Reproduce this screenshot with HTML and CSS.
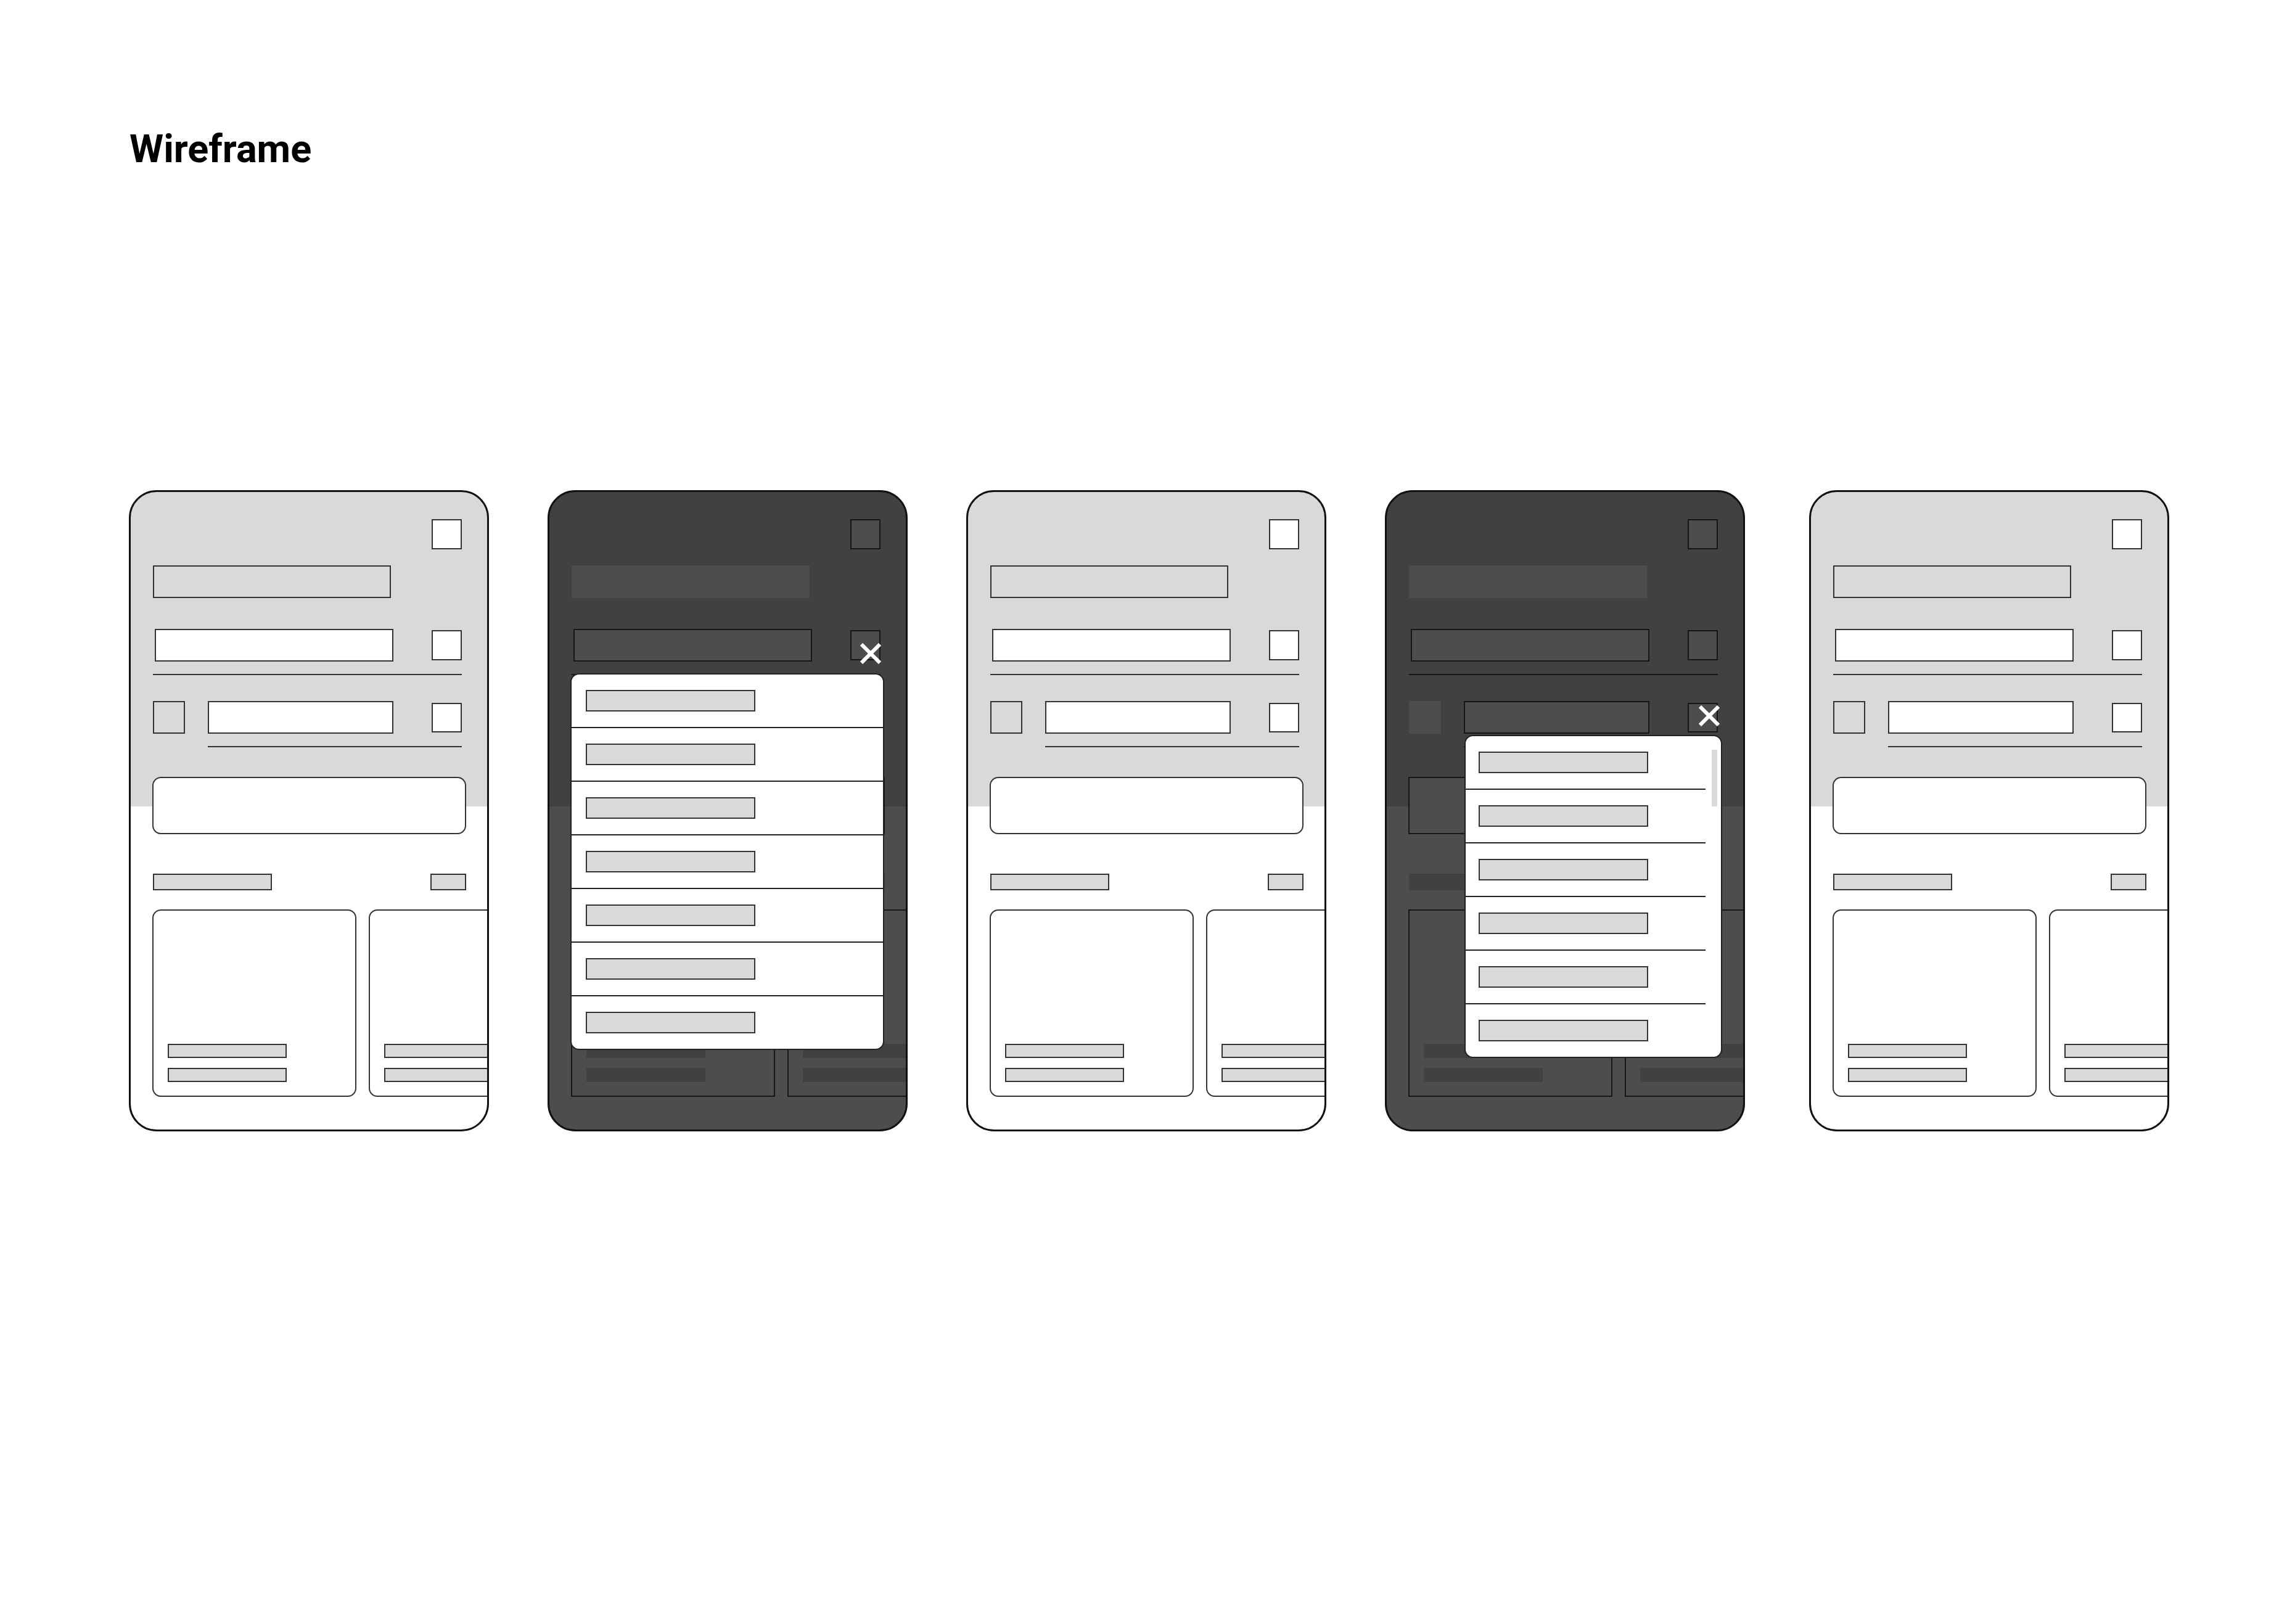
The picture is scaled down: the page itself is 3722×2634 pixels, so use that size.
FILE: index.html
```html
<!DOCTYPE html>
<html lang="en">
<head>
<meta charset="utf-8">
<title>Wireframe</title>
<link rel="stylesheet" href="styles.css">
</head>
<body>
<div class="page">
  <h1 class="title">Wireframe</h1>
  <div class="phones">

    <div class="phone">
      <div class="row-top"><div class="sq"></div></div>
      <div class="title-bar"></div>
      <div class="row2"><div class="input input-wide"></div><div class="sq"></div></div>
      <div class="divider"></div>
      <div class="row3"><div class="sq-small"></div><div class="input input-short"></div><div class="sq sq-r3"></div></div>
      <div class="divider divider-short"></div>
      <div class="search"></div>
      <div class="section-row"><div class="sec-bar"></div><div class="sec-bar sec-bar-sm"></div></div>
      <div class="cards">
        <div class="card"><div class="card-line"></div><div class="card-line"></div></div>
        <div class="card"><div class="card-line"></div><div class="card-line"></div></div>
      </div>
    </div>

    <div class="phone dim">
      <div class="row-top"><div class="sq"></div></div>
      <div class="title-bar"></div>
      <div class="row2"><div class="input input-wide"></div><div class="sq"></div></div>
      <div class="divider"></div>
      <div class="row3"><div class="sq-small"></div><div class="input input-short"></div><div class="sq sq-r3"></div></div>
      <div class="divider divider-short"></div>
      <div class="search"></div>
      <div class="section-row"><div class="sec-bar"></div><div class="sec-bar sec-bar-sm"></div></div>
      <div class="cards">
        <div class="card"><div class="card-line"></div><div class="card-line"></div></div>
        <div class="card"><div class="card-line"></div><div class="card-line"></div></div>
      </div>
      <svg class="close close-a" width="34" height="34" viewBox="0 0 34 34"><path d="M2 2 L32 32 M32 2 L2 32" stroke="#fff" stroke-width="6" fill="none"/></svg>
      <div class="dropdown dd-a">
        <div class="dd-row"><div class="dd-bar"></div></div>
        <div class="dd-row"><div class="dd-bar"></div></div>
        <div class="dd-row"><div class="dd-bar"></div></div>
        <div class="dd-row"><div class="dd-bar"></div></div>
        <div class="dd-row"><div class="dd-bar"></div></div>
        <div class="dd-row"><div class="dd-bar"></div></div>
        <div class="dd-row"><div class="dd-bar"></div></div>
      </div>
    </div>

    <div class="phone">
      <div class="row-top"><div class="sq"></div></div>
      <div class="title-bar"></div>
      <div class="row2"><div class="input input-wide"></div><div class="sq"></div></div>
      <div class="divider"></div>
      <div class="row3"><div class="sq-small"></div><div class="input input-short"></div><div class="sq sq-r3"></div></div>
      <div class="divider divider-short"></div>
      <div class="search"></div>
      <div class="section-row"><div class="sec-bar"></div><div class="sec-bar sec-bar-sm"></div></div>
      <div class="cards">
        <div class="card"><div class="card-line"></div><div class="card-line"></div></div>
        <div class="card"><div class="card-line"></div><div class="card-line"></div></div>
      </div>
    </div>

    <div class="phone dim">
      <div class="row-top"><div class="sq"></div></div>
      <div class="title-bar"></div>
      <div class="row2"><div class="input input-wide"></div><div class="sq"></div></div>
      <div class="divider"></div>
      <div class="row3"><div class="sq-small"></div><div class="input input-short"></div><div class="sq sq-r3"></div></div>
      <div class="divider divider-short"></div>
      <div class="search"></div>
      <div class="section-row"><div class="sec-bar"></div><div class="sec-bar sec-bar-sm"></div></div>
      <div class="cards">
        <div class="card"><div class="card-line"></div><div class="card-line"></div></div>
        <div class="card"><div class="card-line"></div><div class="card-line"></div></div>
      </div>
      <svg class="close close-b" width="34" height="34" viewBox="0 0 34 34"><path d="M2 2 L32 32 M32 2 L2 32" stroke="#fff" stroke-width="6" fill="none"/></svg>
      <div class="dropdown dd-b">
        <div class="dd-row"><div class="dd-bar"></div></div>
        <div class="dd-row"><div class="dd-bar"></div></div>
        <div class="dd-row"><div class="dd-bar"></div></div>
        <div class="dd-row"><div class="dd-bar"></div></div>
        <div class="dd-row"><div class="dd-bar"></div></div>
        <div class="dd-row"><div class="dd-bar"></div></div>
        <div class="scrollbar"></div>
      </div>
    </div>

    <div class="phone phone-last">
      <div class="row-top"><div class="sq"></div></div>
      <div class="title-bar"></div>
      <div class="row2"><div class="input input-wide"></div><div class="sq"></div></div>
      <div class="divider"></div>
      <div class="row3"><div class="sq-small"></div><div class="input input-short"></div><div class="sq sq-r3"></div></div>
      <div class="divider divider-short"></div>
      <div class="search"></div>
      <div class="section-row"><div class="sec-bar"></div><div class="sec-bar sec-bar-sm"></div></div>
      <div class="cards">
        <div class="card"><div class="card-line"></div><div class="card-line"></div></div>
        <div class="card"><div class="card-line"></div><div class="card-line"></div></div>
      </div>
    </div>

  </div>
</div>
</body>
</html>
```

FILE: styles.css
```css
* { box-sizing: border-box; }
html, body { margin: 0; padding: 0; background: #fff; }
body { font-family: Roboto, "Liberation Sans", Arial, sans-serif; }

.page { padding: 210px 0 0 209px; }

.title {
  margin: 0 0 0 1px;
  font-size: 63px;
  line-height: 63px;
  font-weight: 700;
  color: #000;
}

.phones {
  display: flex;
  gap: 95px;
  margin-top: 522px;
  align-items: flex-start;
}

.phone {
  position: relative;
  flex: 0 0 584px;
  width: 584px;
  height: 1040px;
  border: 3px solid #111;
  border-radius: 45px;
  overflow: hidden;
  padding: 44px 41px 0 36px;
  background: linear-gradient(to bottom, #d9d9d9 0, #d9d9d9 510px, #fff 510px);
  display: flex;
  flex-direction: column;
}
.phone-last { margin-left: 9px; }

.sq {
  width: 49px;
  height: 49px;
  background: #fff;
  border: 2px solid #333;
  flex: 0 0 auto;
}
.row-top { display: flex; justify-content: flex-end; }

.title-bar {
  margin-top: 26px;
  width: 386px;
  height: 53px;
  background: #d9d9d9;
  border: 2px solid #333;
}

.row2 {
  margin-top: 50px;
  display: flex;
  align-items: center;
  justify-content: space-between;
}
.input {
  height: 53px;
  background: #fff;
  border: 2px solid #333;
}
.input-wide { width: 387px; margin-left: 3px; }

.divider {
  height: 2px;
  background: #333;
  margin-top: 20px;
}
.divider-short { margin-left: 89px; }

.row3 {
  margin-top: 42px;
  display: flex;
  align-items: center;
}
.sq-small {
  width: 52px;
  height: 53px;
  background: #d9d9d9;
  border: 2px solid #333;
}
.input-short { width: 301px; margin-left: 37px; }
.sq-r3 { height: 48px; margin-left: auto; }

.search {
  margin: 48px -7px 0 -1px;
  height: 93px;
  background: #fff;
  border: 2px solid #333;
  border-radius: 14px;
}

.section-row {
  margin: 64px -7px 0 0;
  display: flex;
  justify-content: space-between;
}
.sec-bar {
  width: 193px;
  height: 27px;
  background: #d9d9d9;
  border: 2px solid #333;
}
.sec-bar-sm { width: 58px; }

.cards {
  margin: 31px 0 0 -1px;
  display: flex;
  gap: 20px;
}
.card {
  flex: 0 0 331px;
  width: 331px;
  height: 304px;
  background: #fff;
  border: 2px solid #333;
  border-radius: 14px;
  display: flex;
  flex-direction: column;
  justify-content: flex-end;
  gap: 16px;
  padding: 0 0 22px 23px;
}
.card-line {
  width: 193px;
  height: 23px;
  background: #d9d9d9;
  border: 2px solid #333;
}

/* dimmed (modal open) variant */
.phone.dim { background: linear-gradient(to bottom, #414141 0, #414141 510px, #4d4d4d 510px); }
.dim .sq { background: #4d4d4d; border-color: #161616; }
.dim .title-bar { background: #4d4d4d; border-color: #4d4d4d; }
.dim .input { background: #4d4d4d; border-color: #161616; }
.dim .sq-small { background: #4d4d4d; border-color: #4d4d4d; }
.dim .divider { background: #161616; }
.dim .search { background: #4d4d4d; border-color: #161616; border-radius: 0; }
.dim .sec-bar { background: #414141; border-color: #414141; }
.dim .card { background: #4d4d4d; border-color: #161616; border-radius: 0; }
.dim .card-line { background: #414141; border-color: #414141; }

.close { position: absolute; z-index: 3; }
.close-a { left: 504px; top: 245px; }
.close-b { left: 506px; top: 346px; }

.dropdown {
  position: absolute;
  z-index: 2;
  background: #fff;
  border: 2px solid #222;
  border-radius: 14px;
  display: flex;
  flex-direction: column;
  overflow: hidden;
}
.dd-a { left: 34px; top: 294px; width: 509px; height: 611px; }
.dd-b { left: 126px; top: 394px; width: 418px; height: 524px; }

.dd-row {
  flex: 1 1 0;
  display: flex;
  align-items: center;
  padding-left: 23px;
  border-bottom: 2px solid #222;
}
.dd-row:last-of-type { border-bottom: none; }
.dd-b .dd-row { padding-left: 21px; margin-right: 25px; }
.dd-b .dd-row:nth-child(6) { border-bottom: none; }

.dd-bar {
  width: 275px;
  height: 35px;
  background: #d9d9d9;
  border: 2px solid #333;
}

.scrollbar {
  position: absolute;
  right: 6px;
  top: 22px;
  width: 9px;
  height: 92px;
  background: #d9d9d9;
}
```
